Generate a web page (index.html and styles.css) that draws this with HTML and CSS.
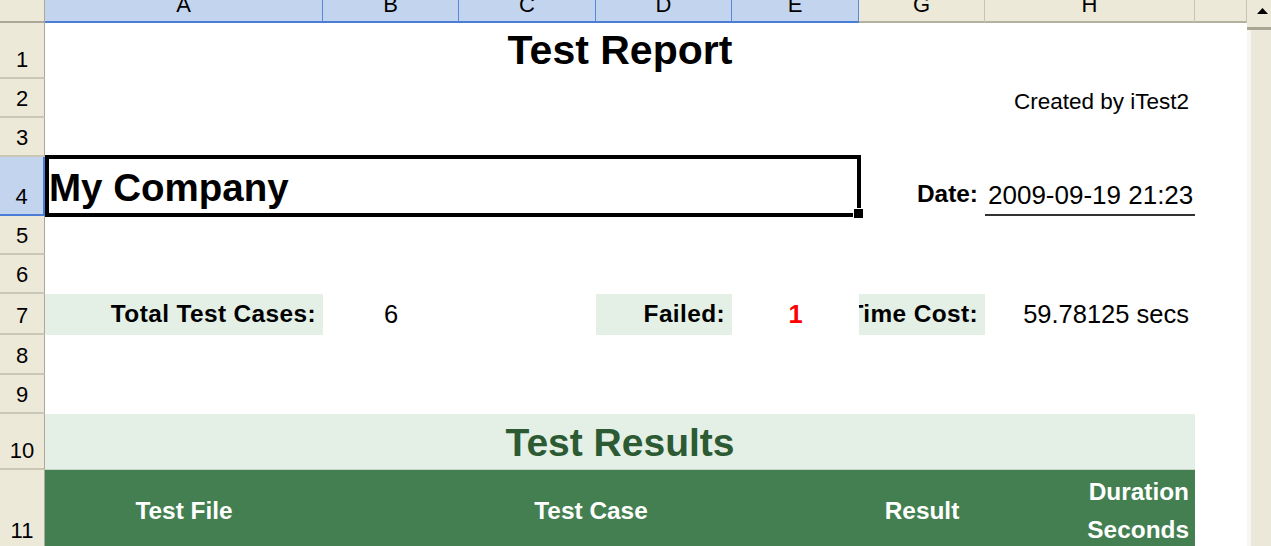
FILE: index.html
```html
<!DOCTYPE html>
<html>
<head>
<meta charset="utf-8">
<title>Test Report</title>
<link rel="stylesheet" href="styles.css">
</head>
<body>
<div class="window">
  <div class="sheet">
    <!-- column headers -->
    <div class="corner"></div>
    <div class="colhead sel">A</div>
    <div class="colhead sel">B</div>
    <div class="colhead sel">C</div>
    <div class="colhead sel">D</div>
    <div class="colhead sel">E</div>
    <div class="colhead">G</div>
    <div class="colhead">H</div>
    <div class="colhead"></div>

    <!-- row 1 -->
    <div class="rowhead">1</div>
    <div class="cell title span-ah">Test Report</div>
    <div class="cell"></div>

    <!-- row 2 -->
    <div class="rowhead">2</div>
    <div class="cell"></div><div class="cell"></div><div class="cell"></div><div class="cell"></div><div class="cell"></div><div class="cell"></div>
    <div class="cell created">Created by iTest2</div>
    <div class="cell"></div>

    <!-- row 3 -->
    <div class="rowhead">3</div>
    <div class="cell"></div><div class="cell"></div><div class="cell"></div><div class="cell"></div><div class="cell"></div><div class="cell"></div><div class="cell"></div><div class="cell"></div>

    <!-- row 4 -->
    <div class="rowhead sel">4</div>
    <div class="cell company span-ae">My Company</div>
    <div class="cell label date-label">Date:</div>
    <div class="cell date-value">2009-09-19 21:23</div>
    <div class="cell"></div>

    <!-- row 5 -->
    <div class="rowhead">5</div>
    <div class="cell"></div><div class="cell"></div><div class="cell"></div><div class="cell"></div><div class="cell"></div><div class="cell"></div><div class="cell"></div><div class="cell"></div>

    <!-- row 6 -->
    <div class="rowhead">6</div>
    <div class="cell"></div><div class="cell"></div><div class="cell"></div><div class="cell"></div><div class="cell"></div><div class="cell"></div><div class="cell"></div><div class="cell"></div>

    <!-- row 7 -->
    <div class="rowhead">7</div>
    <div class="cell label stat-label">Total Test Cases:</div>
    <div class="cell stat-value center">6</div>
    <div class="cell"></div>
    <div class="cell label stat-label">Failed:</div>
    <div class="cell stat-value center failed">1</div>
    <div class="cell label stat-label">Time Cost:</div>
    <div class="cell stat-value right">59.78125 secs</div>
    <div class="cell"></div>

    <!-- row 8 -->
    <div class="rowhead">8</div>
    <div class="cell"></div><div class="cell"></div><div class="cell"></div><div class="cell"></div><div class="cell"></div><div class="cell"></div><div class="cell"></div><div class="cell"></div>

    <!-- row 9 -->
    <div class="rowhead">9</div>
    <div class="cell"></div><div class="cell"></div><div class="cell"></div><div class="cell"></div><div class="cell"></div><div class="cell"></div><div class="cell"></div><div class="cell"></div>

    <!-- row 10 -->
    <div class="rowhead">10</div>
    <div class="cell results span-ah">Test Results</div>
    <div class="cell"></div>

    <!-- row 11 -->
    <div class="rowhead">11</div>
    <div class="cell th center">Test File</div>
    <div class="cell th center span-be">Test Case</div>
    <div class="cell th center">Result</div>
    <div class="cell th th-multi">Duration<br>Seconds</div>
    <div class="cell"></div>
  </div>

  <div class="scrollbar">
    <div class="sb-btn">
      <svg width="11" height="6" viewBox="0 0 11 6"><path d="M0 6 L5.5 0 L11 6 Z" fill="#000"/></svg>
    </div>
    <div class="sb-track"></div>
  </div>
</div>
</body>
</html>
```

FILE: styles.css
```css
* {
  box-sizing: border-box;
  margin: 0;
  padding: 0;
}

html, body {
  width: 1271px;
  height: 546px;
  overflow: hidden;
  background: #ffffff;
}

body {
  font-family: "Liberation Sans", Arial, sans-serif;
  color: #000;
}

.window {
  display: flex;
  width: 1271px;
  height: 546px;
}

.sheet {
  flex: 0 0 1247px;
  display: grid;
  grid-template-columns: 45px 278px 136px 137px 136px 127px 126px 210px 52px;
  grid-template-rows: 23px 56px 39px 39px 59px 39px 39px 41px 40px 39px 56px 80px;
  overflow: hidden;
}

/* headers */
.corner {
  background: #ece9d8;
  border-right: 1px solid #aca899;
  border-bottom: 2px solid #aca899;
}

.colhead {
  background: #ece9d8;
  border-right: 1px solid #c9c5b4;
  border-bottom: 2px solid #b5b19f;
  font-size: 22px;
  line-height: 1;
  display: flex;
  justify-content: center;
  align-items: flex-end;
  padding-bottom: 5px;
  overflow: hidden;
}

.colhead.sel {
  background: #c3d4ef;
  border-right: 1px solid #5b87d8;
  border-bottom: 2px solid #4c7dd6;
}

.rowhead {
  background: #ece9d8;
  border-right: 1px solid #aca899;
  border-bottom: 2px solid #cbc7b6;
  font-size: 22px;
  line-height: 1;
  display: flex;
  justify-content: center;
  align-items: flex-end;
  padding-bottom: 6px;
}

.rowhead.sel {
  background: #c3d4ef;
  border-right: 2px solid #4c7dd6;
  border-bottom: 2px solid #4c7dd6;
}

/* cells */
.cell {
  display: flex;
  white-space: nowrap;
  line-height: 1;
  overflow: hidden;
}

.span-ah { grid-column: span 7; }
.span-ae { grid-column: span 5; }
.span-be { grid-column: span 4; }

.center { justify-content: center; }
.right { justify-content: flex-end; padding-right: 6px; }

.title {
  justify-content: center;
  font-size: 41px;
  font-weight: bold;
  padding-top: 7px;
}

.created {
  justify-content: flex-end;
  font-size: 22.5px;
  padding-top: 12px;
  padding-right: 6px;
}

.company {
  position: relative;
  overflow: visible;
  font-size: 38.5px;
  font-weight: bold;
  padding-top: 12px;
  padding-left: 4px;
}

.company::after {
  content: "";
  position: absolute;
  top: -2px;
  left: 0;
  right: -2px;
  bottom: -1px;
  border: 4px solid #000;
}

.company::before {
  content: "";
  position: absolute;
  right: -5px;
  bottom: -3px;
  width: 9px;
  height: 9px;
  background: #000;
  border: 1px solid #fff;
  z-index: 2;
}

.label {
  justify-content: flex-end;
  font-size: 24.4px;
  font-weight: bold;
  padding-right: 6px;
}

.date-label {
  padding-top: 25px;
  padding-right: 7px;
}

.date-value {
  font-size: 26px;
  padding-top: 25px;
  padding-left: 3px;
  border-bottom: 2px solid #333;
}

.stat-label {
  background: #e4efe6;
  padding-top: 8px;
  padding-right: 7px;
  letter-spacing: 0.4px;
}

.stat-value {
  font-size: 25.5px;
  padding-top: 8px;
}

.failed {
  color: #ff0000;
  font-weight: bold;
}

.results {
  justify-content: center;
  background: #e4efe6;
  border-bottom: 1px solid #c3d3c5;
  color: #2b5a33;
  font-size: 39px;
  font-weight: bold;
  padding-top: 9px;
}

.th {
  background: #437f50;
  color: #ffffff;
  font-size: 24.4px;
  font-weight: bold;
  padding-top: 29px;
}

.th-multi {
  justify-content: flex-end;
  text-align: right;
  line-height: 38px;
  padding-top: 3px;
  padding-right: 6px;
}

/* scrollbar */
.scrollbar {
  flex: 0 0 24px;
  display: flex;
  flex-direction: column;
  background: #ece9d8;
}

.sb-btn {
  height: 30px;
  background: #ece9d8;
  border-bottom: 3px solid #a9a694;
  display: flex;
  align-items: center;
  padding-left: 10px;
  padding-bottom: 6px;
}

.sb-track {
  flex: 1;
  border-left: 4px solid #f7f6f0;
  background: #ebe8da;
}
```
